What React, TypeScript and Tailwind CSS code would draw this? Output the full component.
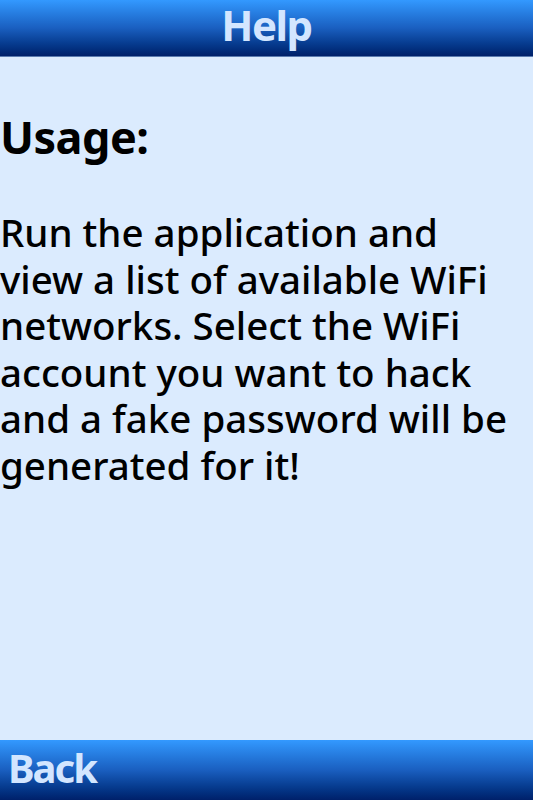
import React from "react";

const lines = [
  "Run the application and",
  "view a list of available WiFi",
  "networks. Select the WiFi",
  "account you want to hack",
  "and a fake password will be",
  "generated for it!",
];

export default function App() {
  const font = { fontFamily: "'Noto Sans', 'DejaVu Sans', sans-serif" };
  return (
    <div className="flex h-[800px] w-[533px] flex-col overflow-hidden bg-[#dbebfe]" style={font}>
      <div className="flex h-[56px] items-start justify-center bg-gradient-to-b from-[#3399ff] via-[#1a5fc0] to-[#00206a]">
        <span className="mt-[1px] text-[42px] font-bold leading-[48px] tracking-[-1.5px] text-[#d3e6ff]">Help</span>
      </div>
      <div className="h-[1px] bg-[#5a7bb0]" />
      <div className="flex-1 pt-[52px]">
        <div className="text-[45px] font-bold leading-[56px] tracking-[-0.5px] text-black">Usage:</div>
        <div className="mt-[44px] text-[38.5px] font-medium leading-[46.6px] text-black">
          {lines.map((l, i) => (
            <div key={i} className="whitespace-nowrap">{l}</div>
          ))}
        </div>
      </div>
      <div className="flex h-[60px] items-start bg-gradient-to-b from-[#3399ff] via-[#1a5fc0] to-[#00206a] pl-[8px]">
        <span className="mt-[4px] text-[40px] font-bold leading-[48px] tracking-[-2px] text-[#d3e6ff]">Back</span>
      </div>
    </div>
  );
}
